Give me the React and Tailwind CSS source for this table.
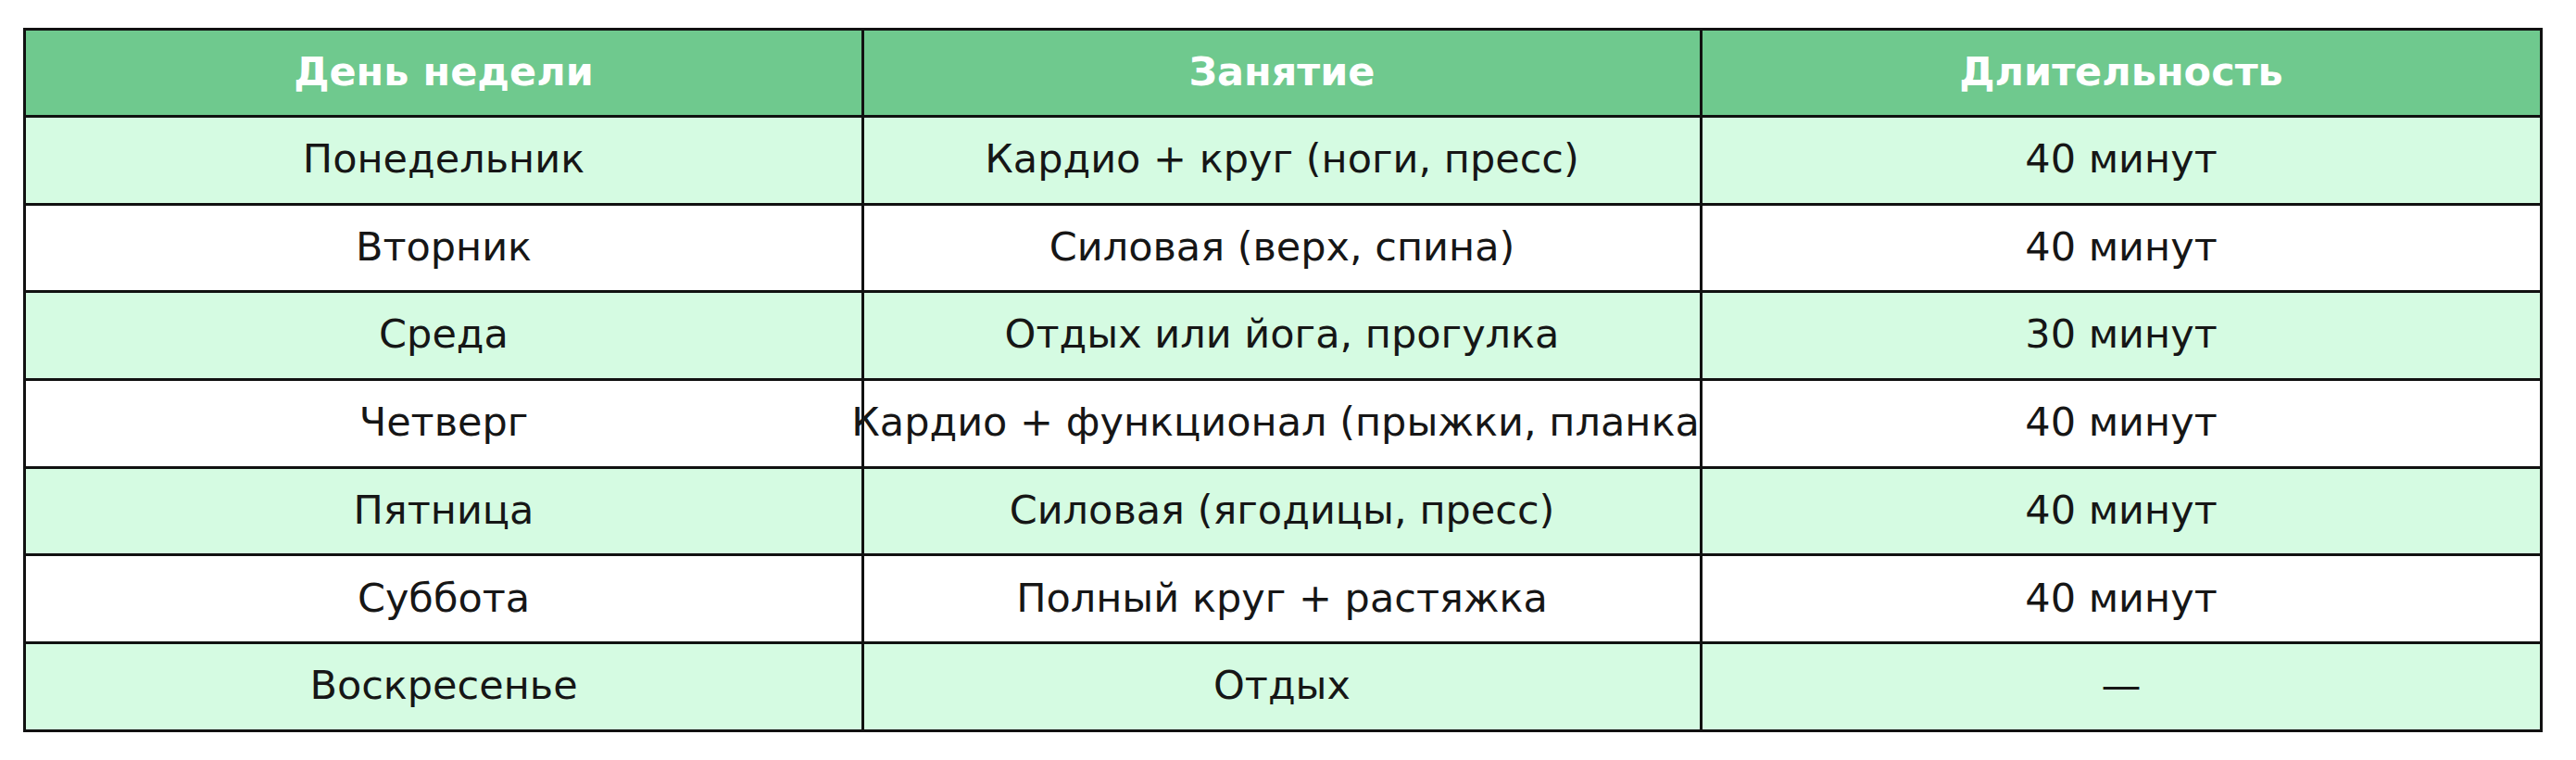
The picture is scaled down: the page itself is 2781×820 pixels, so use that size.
const rows = [
  ['Понедельник', 'Кардио + круг (ноги, пресс)', '40 минут'],
  ['Вторник', 'Силовая (верх, спина)', '40 минут'],
  ['Среда', 'Отдых или йога, прогулка', '30 минут'],
  ['Четверг', 'Кардио + функционал (прыжки, планка', '40 минут'],
  ['Пятница', 'Силовая (ягодицы, пресс)', '40 минут'],
  ['Суббота', 'Полный круг + растяжка', '40 минут'],
  ['Воскресенье', 'Отдых', '—'],
]

const headers = ['День недели', 'Занятие', 'Длительность']

export default function App() {
  return (
    <div className="min-h-[820px] w-[2781px] bg-white pl-[25px] pt-[30px] font-['DejaVu_Sans',sans-serif]">
      <div className="grid w-[2720px] grid-cols-[905px_905px_907px] border-l-[3px] border-t-[3px] border-[#111]">
        {headers.map(h => (
          <div key={h} className="flex h-[94px] items-center justify-center border-b-[3px] border-r-[3px] border-[#111] bg-[#6fc98e] pb-[2px] text-[43px] font-bold text-white">
            {h}
          </div>
        ))}
        {rows.map((r, i) => r.map((cell, j) => (
          <div
            key={i + '-' + j}
            className={`flex h-[94.7px] items-center justify-center whitespace-nowrap border-b-[3px] border-r-[3px] border-[#111] pb-[3px] text-[43px] text-[#161616] ${i % 2 === 0 ? 'bg-[#d5fbe2]' : 'bg-white'}`}
          >
            <span className={j === 1 && i === 3 ? 'pr-[14px]' : ''}>{cell}</span>
          </div>
        )))}
      </div>
    </div>
  )
}
